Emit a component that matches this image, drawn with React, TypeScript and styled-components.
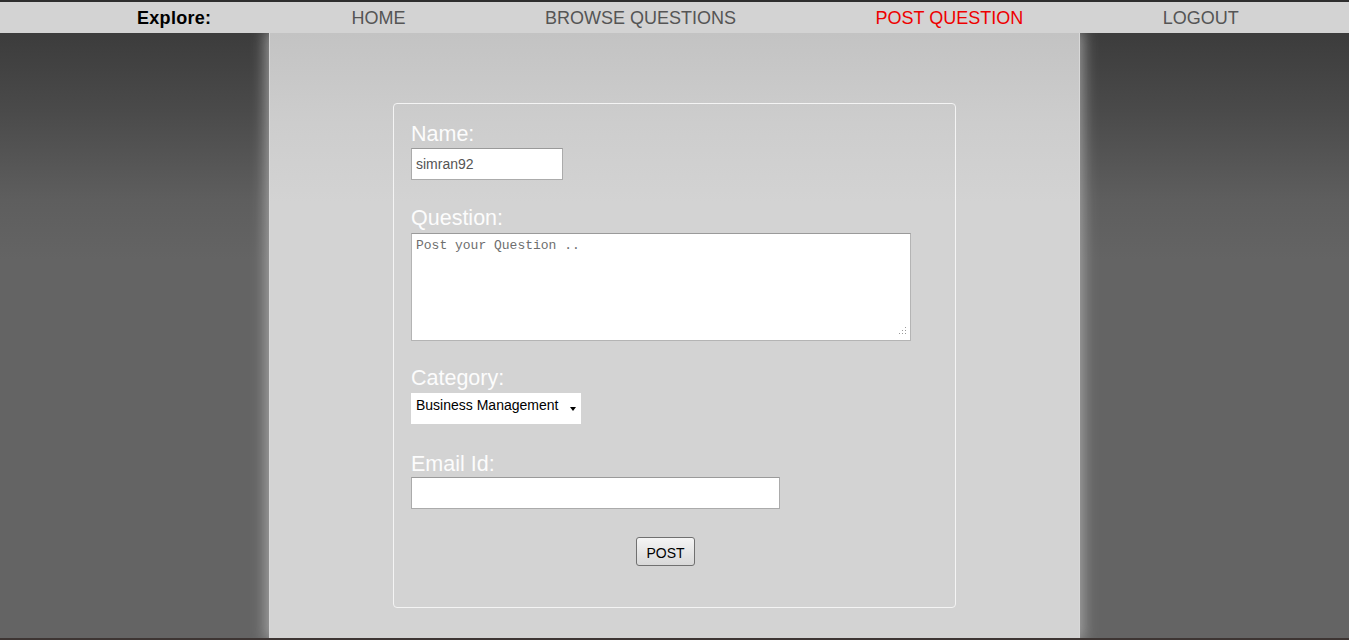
import React from "react";
import styled, { createGlobalStyle } from "styled-components";

const GlobalStyle = createGlobalStyle`
  html, body {
    margin: 0;
    padding: 0;
    height: 100%;
  }
  body {
    font-family: "Liberation Sans", Arial, sans-serif;
    background: linear-gradient(#3c3c3c 33px, #4a4a4a 110px, #5e5e5e 200px, #646464 260px) #646464;
    overflow: hidden;
  }
`;

const Page = styled.div`
  display: flex;
  flex-direction: column;
  height: 640px;
`;

const TopBar = styled.nav`
  flex: 0 0 auto;
  height: 31px;
  border-top: 2px solid #2e2e2e;
  background: #d3d3d3;
  display: flex;
  align-items: center;
  gap: 139.5px;
  padding-left: 137px;
  font-size: 18px;
  line-height: 21px;
  position: relative;
  z-index: 2;
`;

const NavItem = styled.a<{ $active?: boolean; $brand?: boolean }>`
  color: ${(p) => (p.$brand ? "#000" : p.$active ? "#ee0000" : "#555")};
  font-weight: ${(p) => (p.$brand ? "bold" : "normal")};
  min-width: ${(p) => (p.$brand ? "75px" : "0")};
  letter-spacing: ${(p) => (p.$brand ? "0.3px" : "0")};
  text-decoration: none;
  white-space: nowrap;
  padding-top: 1px;
`;

const Column = styled.main`
  flex: 1 1 auto;
  width: 811px;
  margin: 0 auto;
  background: linear-gradient(#c3c3c3, #cdcdcd 90px, #d3d3d3 170px);
  box-shadow: 0 0 14px 3px rgba(190, 190, 190, 0.75);
  border-left: 1px solid #d8d8d8;
  border-right: 1px solid #d8d8d8;
  box-sizing: border-box;
  padding-top: 70px;
  padding-left: 123px;
`;

const BottomLine = styled.div`
  flex: 0 0 2px;
  background: #3d3533;
  position: relative;
  z-index: 2;
`;

const Card = styled.form`
  width: 563px;
  height: 505px;
  box-sizing: border-box;
  border: 1px solid #f4f4f4;
  border-radius: 4px;
  padding: 19px 17px 0 17px;
  display: flex;
  flex-direction: column;
  align-items: flex-start;
`;

const Label = styled.label<{ $gap: number }>`
  display: block;
  color: #fcfcfc;
  font-size: 21.5px;
  line-height: 23px;
  margin-top: ${(p) => p.$gap}px;
`;

const TextInput = styled.input<{ $w: number; $gap: number }>`
  width: ${(p) => p.$w}px;
  height: 32px;
  box-sizing: border-box;
  margin: ${(p) => p.$gap}px 0 0 0;
  border: 1px solid #ababab;
  border-top-color: #9a9a9a;
  background: #fff;
  padding: 0 4px;
  font-family: "Liberation Sans", Arial, sans-serif;
  font-size: 14px;
  color: #555;
  outline: none;
`;

const AreaWrap = styled.div`
  position: relative;
  margin-top: 3px;
  width: 500px;
  height: 108px;
  &::after {
    content: "";
    position: absolute;
    right: 5px;
    bottom: 7px;
    width: 1px;
    height: 1px;
    background: #9a9a9a;
    box-shadow: -3px 0 #9a9a9a, -6px 0 #9a9a9a, 0 -3px #9a9a9a, -3px -3px #9a9a9a, 0 -6px #9a9a9a;
    pointer-events: none;
  }
`;

const TextArea = styled.textarea`
  display: block;
  width: 500px;
  height: 108px;
  box-sizing: border-box;
  margin: 0;
  border: 1px solid #b4b4b4;
  border-top-color: #9a9a9a;
  padding: 4px 4px;
  resize: none;
  font-family: "Liberation Mono", "Courier New", monospace;
  font-size: 13px;
  line-height: 15px;
  color: #333;
  outline: none;
  &::placeholder {
    color: #6e6e6e;
  }
`;

const SelectWrap = styled.div`
  position: relative;
  margin-top: 3px;
  width: 170px;
  height: 31px;
`;

const Select = styled.select`
  width: 170px;
  height: 31px;
  box-sizing: border-box;
  appearance: none;
  -webkit-appearance: none;
  border: none;
  background: #fff;
  border-radius: 0;
  padding: 0 0 8px 5px;
  font-family: "Liberation Sans", Arial, sans-serif;
  font-size: 14px;
  color: #000;
  outline: none;
`;

const Caret = styled.span`
  position: absolute;
  right: 5px;
  top: 14px;
  width: 0;
  height: 0;
  border-left: 3.5px solid transparent;
  border-right: 3.5px solid transparent;
  border-top: 4px solid #000;
  pointer-events: none;
`;

const PostButton = styled.button`
  margin: 28px 0 0 225px;
  width: 59px;
  height: 29px;
  box-sizing: border-box;
  border: 1px solid #707070;
  border-radius: 3px;
  background: linear-gradient(#f5f5f5, #e6e6e6 50%, #d8d8d8);
  font-family: "Liberation Sans", Arial, sans-serif;
  font-size: 14px;
  color: #000;
  padding: 2px 0 0 0;
`;

export default function App() {
  return (
    <>
      <GlobalStyle />
      <Page>
        <TopBar>
          <NavItem $brand>Explore:</NavItem>
          <NavItem href="#">HOME</NavItem>
          <NavItem href="#">BROWSE QUESTIONS</NavItem>
          <NavItem href="#" $active>
            POST QUESTION
          </NavItem>
          <NavItem href="#">LOGOUT</NavItem>
        </TopBar>
        <Column>
          <Card onSubmit={(e) => e.preventDefault()}>
            <Label $gap={0}>Name:</Label>
            <TextInput $w={152} $gap={2} defaultValue="simran92" />
            <Label $gap={27}>Question:</Label>
            <AreaWrap>
              <TextArea placeholder="Post your Question .." />
            </AreaWrap>
            <Label $gap={26}>Category:</Label>
            <SelectWrap>
              <Select defaultValue="bm">
                <option value="bm">Business Management</option>
              </Select>
              <Caret />
            </SelectWrap>
            <Label $gap={29}>Email Id:</Label>
            <TextInput $w={369} $gap={1} />
            <PostButton type="submit">POST</PostButton>
          </Card>
        </Column>
        <BottomLine />
      </Page>
    </>
  );
}
